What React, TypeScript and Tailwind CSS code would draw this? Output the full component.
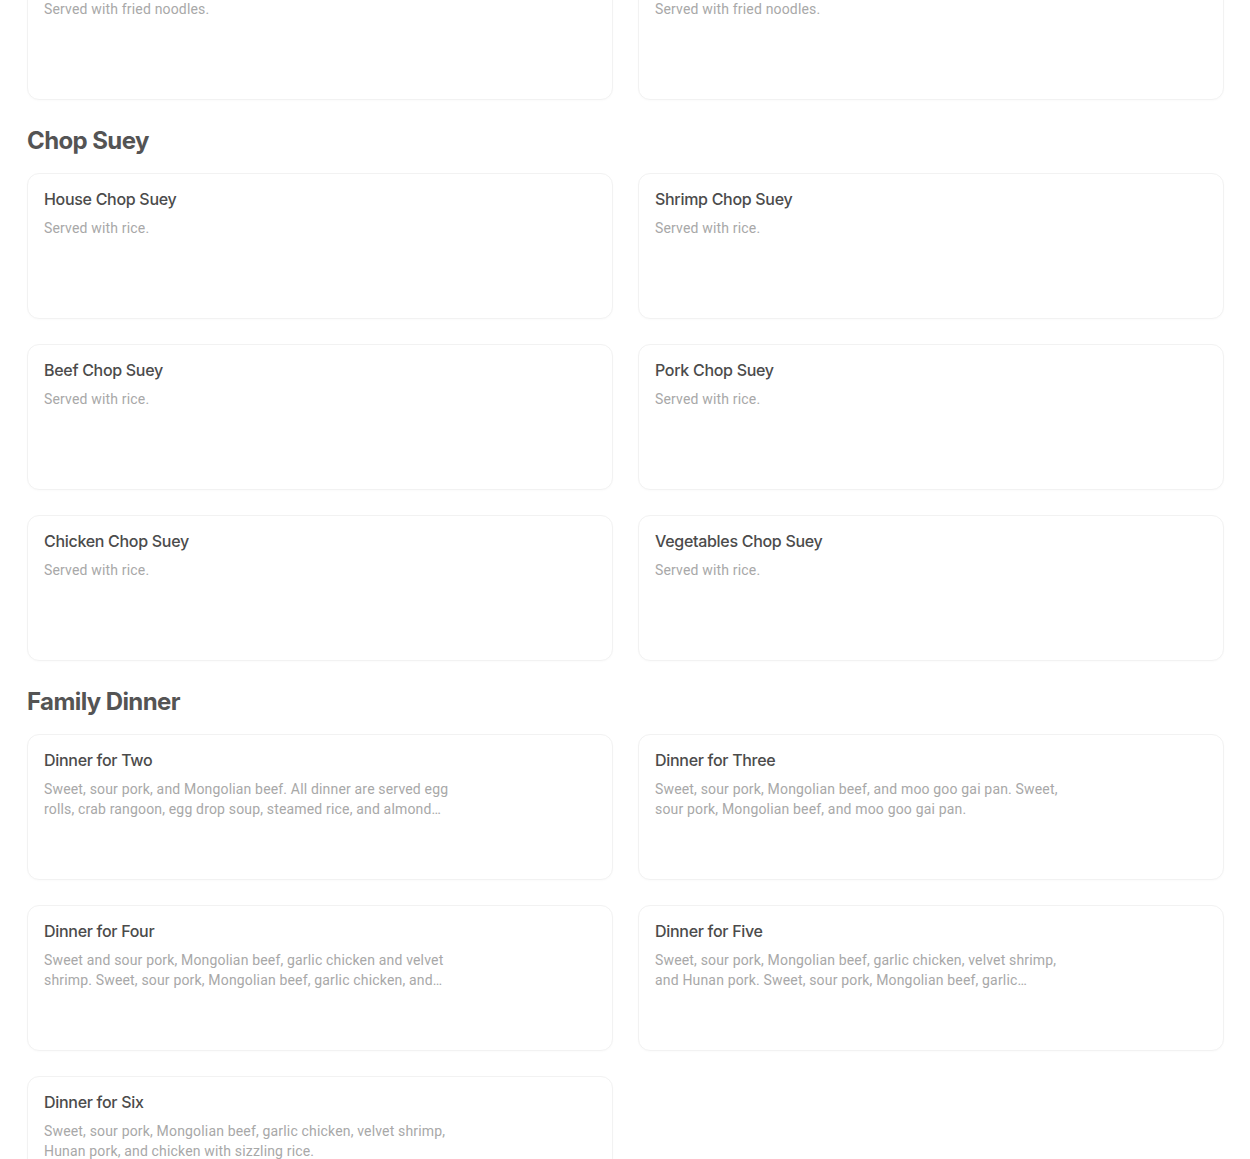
type Item = { name: string; desc: string };

const noodles: Item[] = [
  { name: "Chicken Chow Mein", desc: "Served with fried noodles." },
  { name: "Shrimp Chow Mein", desc: "Served with fried noodles." },
];

const chopSuey: Item[] = [
  { name: "House Chop Suey", desc: "Served with rice." },
  { name: "Shrimp Chop Suey", desc: "Served with rice." },
  { name: "Beef Chop Suey", desc: "Served with rice." },
  { name: "Pork Chop Suey", desc: "Served with rice." },
  { name: "Chicken Chop Suey", desc: "Served with rice." },
  { name: "Vegetables Chop Suey", desc: "Served with rice." },
];

const family: Item[] = [
  {
    name: "Dinner for Two",
    desc: "Sweet, sour pork, and Mongolian beef. All dinner are served egg rolls, crab rangoon, egg drop soup, steamed rice, and almond cookies.",
  },
  {
    name: "Dinner for Three",
    desc: "Sweet, sour pork, Mongolian beef, and moo goo gai pan. Sweet, sour pork, Mongolian beef, and moo goo gai pan.",
  },
  {
    name: "Dinner for Four",
    desc: "Sweet and sour pork, Mongolian beef, garlic chicken and velvet shrimp. Sweet, sour pork, Mongolian beef, garlic chicken, and velvet shrimp.",
  },
  {
    name: "Dinner for Five",
    desc: "Sweet, sour pork, Mongolian beef, garlic chicken, velvet shrimp, and Hunan pork. Sweet, sour pork, Mongolian beef, garlic chicken, velvet shrimp, and Hunan pork.",
  },
  {
    name: "Dinner for Six",
    desc: "Sweet, sour pork, Mongolian beef, garlic chicken, velvet shrimp, Hunan pork, and chicken with sizzling rice.",
  },
];

function MenuCard({ item }: { item: Item }) {
  return (
    <div className="h-[146px] rounded-xl border border-[#f2f2f2] bg-white px-[16px] pt-[13px] shadow-[0_1px_2px_rgba(0,0,0,0.02)]">
      <div className="text-base leading-6 font-medium tracking-[-0.3px] text-[#4b4b4b]">{item.name}</div>
      <p className="mt-[7px] max-w-[412px] font-['Roboto',sans-serif] text-sm leading-5 tracking-[0.17px] text-[#a8a8a8] line-clamp-2">
        {item.desc}
      </p>
    </div>
  );
}

function Grid({ items }: { items: Item[] }) {
  return (
    <div className="grid grid-cols-2 gap-[25px]">
      {items.map((it) => (
        <MenuCard key={it.name} item={it} />
      ))}
    </div>
  );
}

function Section({ title, items, className }: { title: string; items: Item[]; className: string }) {
  return (
    <section className={className}>
      <h2 className="mb-4 text-2xl leading-8 font-bold tracking-[-0.6px] text-[#545454]">
        {title}
      </h2>
      <Grid items={items} />
    </section>
  );
}

export default function App() {
  return (
    <div
      className="h-[1159px] overflow-hidden bg-white pl-[27px] pr-[26px]"
      style={{ fontFamily: "Inter, 'Noto Sans', sans-serif" }}
    >
      <div className="-mt-[46px]">
        <Grid items={noodles} />
      </div>
      <Section title="Chop Suey" items={chopSuey} className="mt-[25px]" />
      <Section title="Family Dinner" items={family} className="mt-[25px]" />
    </div>
  );
}
